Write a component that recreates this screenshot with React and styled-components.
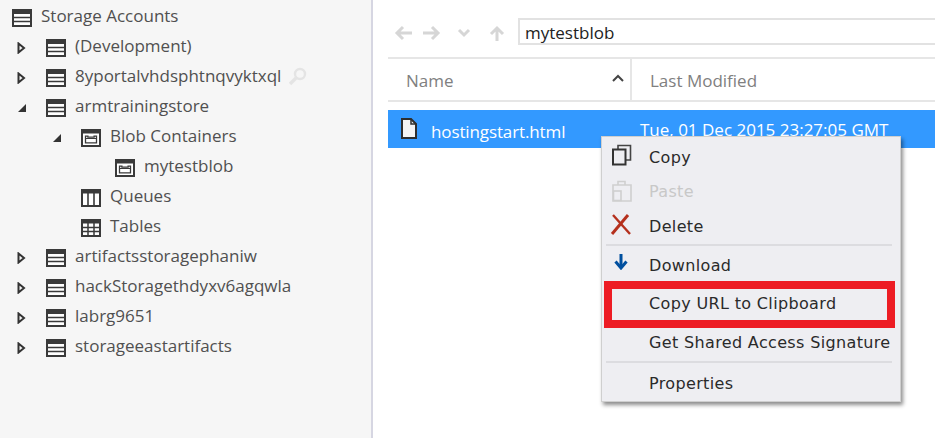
import React from "react"
import styled, { createGlobalStyle } from "styled-components"

const GlobalStyle = createGlobalStyle`
  html, body {
    margin: 0;
    padding: 0;
    height: 100%;
    background: #fff;
    overflow: hidden;
  }
  #root {
    height: 100%;
  }
`

const Page = styled.div`
  position: relative;
  display: flex;
  width: 948px;
  height: 438px;
  font-family: "Open Sans", "Liberation Sans", sans-serif;
  overflow: hidden;
`

const Sidebar = styled.aside`
  box-sizing: border-box;
  width: 373px;
  flex: none;
  padding-top: 3px;
  background: #f6f6f6;
  border-right: 2px solid #d6d6e2;
`

const Row = styled.div`
  display: flex;
  align-items: center;
  height: 30px;
  padding-left: ${({ $indent }) => $indent}px;
  font-size: 17px;
  color: #505050;
  white-space: nowrap;
`

const Toggle = styled.span`
  display: flex;
  width: 29px;
  flex: none;
`

const NodeIcon = styled.span`
  display: flex;
  margin-right: 9px;
  flex: none;
`

const Label = styled.span`
  margin-bottom: 6px;
`

const Search = styled.span`
  display: flex;
  margin-left: 7px;
  margin-bottom: 4px;
`

const Main = styled.main`
  flex: 1;
  padding: 17px 13px 0 15px;
`

const Toolbar = styled.div`
  display: flex;
  align-items: flex-start;
  height: 28px;
`

const NavIcons = styled.div`
  display: flex;
  align-items: center;
  width: 130px;
  flex: none;
  padding: 8px 0 0 6px;
  box-sizing: border-box;
  gap: 11px;
`

const Address = styled.div`
  flex: 1;
  box-sizing: border-box;
  height: 27px;
  margin-top: 1px;
  padding-left: 5px;
  border: 2px solid #e2e2e2;
  border-right: none;
  font-size: 17px;
  line-height: 25px;
  color: #222;
`

const Header = styled.div`
  display: flex;
  height: 41px;
  margin-top: 12px;
  border-top: 2px solid #e6e6e6;
  border-bottom: 2px solid #e6e6e6;
  font-size: 17px;
  color: #808080;
`

const HeaderCell = styled.div`
  display: flex;
  align-items: center;
  justify-content: space-between;
  box-sizing: border-box;
  width: ${({ $width }) => $width};
  padding: 2px 6px 0 18px;
  border-right: ${({ $divided }) => ($divided ? "2px solid #e6e6e6" : "none")};
`

const SortMark = styled.svg`
  margin-top: -6px;
`

const FileRow = styled.div`
  display: flex;
  align-items: center;
  height: 38px;
  margin-top: 8px;
  padding-left: 12px;
  background: #3399ff;
  color: #fff;
  font-size: 17px;
  white-space: nowrap;
`

const FileIcon = styled.span`
  display: flex;
  width: 31px;
  margin-top: -2px;
  flex: none;
`

const FileName = styled.span`
  width: 209px;
  flex: none;
  padding-top: 4px;
  letter-spacing: -0.12px;
`

const FileDate = styled.span`
  margin-top: 1px;
`

const Menu = styled.div`
  position: absolute;
  left: 601px;
  top: 136px;
  box-sizing: border-box;
  width: 300px;
  height: 266px;
  padding-top: 3px;
  background: #eeeef2;
  border: 1px solid #cfcfcf;
  box-shadow: 2px 3px 4px rgba(0, 0, 0, 0.45);
  font-family: "DejaVu Sans", Verdana, sans-serif;
  font-size: 16px;
  letter-spacing: 0.35px;
`

const MenuItem = styled.div`
  display: flex;
  align-items: center;
  height: ${({ $tall }) => ($tall ? "38.3px" : "34.5px")};
  padding-left: 47px;
  color: ${({ $disabled }) => ($disabled ? "#c8c8c8" : "#2a2a2a")};
  white-space: nowrap;
`

const MenuIcon = styled.span`
  position: absolute;
  left: ${({ $left }) => $left || 8}px;
  display: flex;
  margin-top: ${({ $lift }) => $lift || 0}px;
`

const Separator = styled.div`
  height: 2px;
  margin: 0 8px 1px 4px;
  background: #dcdce0;
`

const Highlight = styled.div`
  position: absolute;
  left: 2px;
  top: 144px;
  box-sizing: border-box;
  width: 291px;
  height: 47px;
  border: 8px solid #ed1c24;
`

const AccountIcon = () => (
  <svg width="20" height="18" viewBox="0 0 20 18">
    <rect x="0" y="0" width="20" height="18" fill="#fff" />
    <rect x="1" y="1" width="18" height="16" fill="none" stroke="#3a3a3a" strokeWidth="2" />
    <rect x="1" y="1" width="18" height="4" fill="#3a3a3a" />
    <path d="M1 8.5h18M1 12.5h18" stroke="#3a3a3a" strokeWidth="1.6" />
  </svg>
)

const BlobIcon = () => (
  <svg width="20" height="18" viewBox="0 0 20 18">
    <rect x="0" y="0" width="20" height="18" fill="#fff" />
    <rect x="1" y="1" width="18" height="16" fill="none" stroke="#3a3a3a" strokeWidth="2" />
    <rect x="1" y="1" width="18" height="3.5" fill="#3a3a3a" />
    <path d="M4.5 7.2h2.4v1h6.2v-1h2.4v6.6h-11z" fill="none" stroke="#3a3a3a" strokeWidth="1.3" />
    <path d="M4.5 9.5h11" stroke="#3a3a3a" strokeWidth="1" />
  </svg>
)

const QueueIcon = () => (
  <svg width="20" height="18" viewBox="0 0 20 18">
    <rect x="0" y="0" width="20" height="18" fill="#fff" />
    <rect x="1" y="1" width="18" height="16" fill="none" stroke="#3a3a3a" strokeWidth="2" />
    <rect x="1" y="1" width="18" height="3.5" fill="#3a3a3a" />
    <path d="M7 4v13M13 4v13" stroke="#3a3a3a" strokeWidth="1.6" />
  </svg>
)

const TableIcon = () => (
  <svg width="20" height="18" viewBox="0 0 20 18">
    <rect x="0" y="0" width="20" height="18" fill="#fff" />
    <rect x="1" y="1" width="18" height="16" fill="none" stroke="#3a3a3a" strokeWidth="2" />
    <rect x="1" y="1" width="18" height="3.5" fill="#3a3a3a" />
    <path d="M7 4v13M13 4v13M1 8.5h18M1 12.5h18" stroke="#3a3a3a" strokeWidth="1.5" />
  </svg>
)

const Collapsed = () => (
  <svg width="9" height="12" viewBox="0 0 9 12">
    <path d="M1.5 1.5 7 6l-5.5 4.5z" fill="#f6f6f6" stroke="#333" strokeWidth="2" />
  </svg>
)

const Expanded = () => (
  <svg width="10" height="10" viewBox="0 0 10 10">
    <path d="M9 1v8H1z" fill="#333" />
  </svg>
)

const Magnifier = () => (
  <svg width="19" height="19" viewBox="0 0 19 19">
    <circle cx="12" cy="7" r="5" fill="none" stroke="#e4e4e4" strokeWidth="2.4" />
    <path d="M8 11 2 17" stroke="#e4e4e4" strokeWidth="3.4" />
  </svg>
)

const Arrow = ({ d, width = 18 }) => (
  <svg width={width} height="16" viewBox={`0 0 ${width} 16`}>
    <path d={d} fill="none" stroke="#d6d6d6" strokeWidth="3" />
  </svg>
)

const PageIcon = () => (
  <svg width="18" height="21" viewBox="0 0 18 21">
    <path d="M2 1h9l5 5v14H2z" fill="#f4f4f4" stroke="#2e2e2e" strokeWidth="2" />
    <path d="M11 1v5h5" fill="none" stroke="#2e2e2e" strokeWidth="1.5" />
  </svg>
)

const CopyIcon = () => (
  <svg width="21" height="22" viewBox="0 0 21 22">
    <path d="M7 5V1.5h12.5V16H15" fill="none" stroke="#444" strokeWidth="1.6" />
    <rect x="2" y="5.5" width="12.5" height="15" fill="none" stroke="#333" strokeWidth="2" />
  </svg>
)

const PasteIcon = () => (
  <svg width="20" height="23" viewBox="0 0 20 23">
    <path d="M6 6V2.5h7V6M1 6h18v16H1z" fill="none" stroke="#cfcfcf" strokeWidth="1.6" />
    <rect x="1.5" y="12" width="7.5" height="9.5" fill="none" stroke="#cfcfcf" strokeWidth="1.6" />
  </svg>
)

const CrossIcon = () => (
  <svg width="21" height="21" viewBox="0 0 21 21">
    <path d="M2 20 18 1" stroke="#b5301d" strokeWidth="3" />
    <path d="M3 1l17 19" stroke="#b5301d" strokeWidth="2.4" />
  </svg>
)

const DownIcon = () => (
  <svg width="14" height="16" viewBox="0 0 14 16">
    <path d="M7 0v13" stroke="#004f9f" strokeWidth="3" />
    <path d="M1.5 7.5 7 14l5.5-6.5" fill="none" stroke="#004f9f" strokeWidth="3" />
  </svg>
)

const TREE = [
  { label: "Storage Accounts", indent: 12, icon: AccountIcon },
  { label: "(Development)", indent: 17, toggle: "closed", icon: AccountIcon },
  { label: "8yportalvhdsphtnqvyktxql", indent: 17, toggle: "closed", icon: AccountIcon, search: true },
  { label: "armtrainingstore", indent: 17, toggle: "open", icon: AccountIcon },
  { label: "Blob Containers", indent: 52, toggle: "open", icon: BlobIcon },
  { label: "mytestblob", indent: 115, icon: BlobIcon },
  { label: "Queues", indent: 81, icon: QueueIcon },
  { label: "Tables", indent: 81, icon: TableIcon },
  { label: "artifactsstoragephaniw", indent: 17, toggle: "closed", icon: AccountIcon },
  { label: "hackStoragethdyxv6agqwla", indent: 17, toggle: "closed", icon: AccountIcon },
  { label: "labrg9651", indent: 17, toggle: "closed", icon: AccountIcon },
  { label: "storageeastartifacts", indent: 17, toggle: "closed", icon: AccountIcon },
]

const App = () => (
  <Page>
    <GlobalStyle />
    <Sidebar>
      {TREE.map(({ label, indent, toggle, icon: Icon, search }) => (
        <Row key={label} $indent={indent}>
          {toggle && (
            <Toggle>{toggle === "open" ? <Expanded /> : <Collapsed />}</Toggle>
          )}
          <NodeIcon>
            <Icon />
          </NodeIcon>
          <Label>{label}</Label>
          {search && (
            <Search>
              <Magnifier />
            </Search>
          )}
        </Row>
      ))}
    </Sidebar>
    <Main>
      <Toolbar>
        <NavIcons>
          <Arrow d="M18 8H3M9 2 3 8l6 6" />
          <Arrow d="M0 8h15M9 2l6 6-6 6" />
          <Arrow d="M7 5l5 5 5-5" width={26} />
          <Arrow d="M8 16V3M2 9l6-6 6 6" width={16} />
        </NavIcons>
        <Address>mytestblob</Address>
      </Toolbar>
      <Header>
        <HeaderCell $width="244px" $divided>
          Name
          <SortMark width="12" height="8" viewBox="0 0 12 8">
            <path d="M1 7l5-5 5 5" fill="none" stroke="#444" strokeWidth="2" />
          </SortMark>
        </HeaderCell>
        <HeaderCell $width="300px">Last Modified</HeaderCell>
      </Header>
      <FileRow>
        <FileIcon>
          <PageIcon />
        </FileIcon>
        <FileName>hostingstart.html</FileName>
        <FileDate>Tue, 01 Dec 2015 23:27:05 GMT</FileDate>
      </FileRow>
    </Main>
    <Menu>
      <MenuItem>
        <MenuIcon $lift={-5} $left={9}>
          <CopyIcon />
        </MenuIcon>
        Copy
      </MenuItem>
      <MenuItem $disabled>
        <MenuIcon $lift={-2} $left={10}>
          <PasteIcon />
        </MenuIcon>
        Paste
      </MenuItem>
      <MenuItem>
        <MenuIcon $lift={-4}>
          <CrossIcon />
        </MenuIcon>
        Delete
      </MenuItem>
      <Separator />
      <MenuItem $tall>
        <MenuIcon $lift={-7} $left={12}>
          <DownIcon />
        </MenuIcon>
        Download
      </MenuItem>
      <MenuItem $tall>Copy URL to Clipboard</MenuItem>
      <MenuItem $tall>Get Shared Access Signature</MenuItem>
      <Separator />
      <MenuItem $tall>Properties</MenuItem>
      <Highlight />
    </Menu>
  </Page>
)

export default App
